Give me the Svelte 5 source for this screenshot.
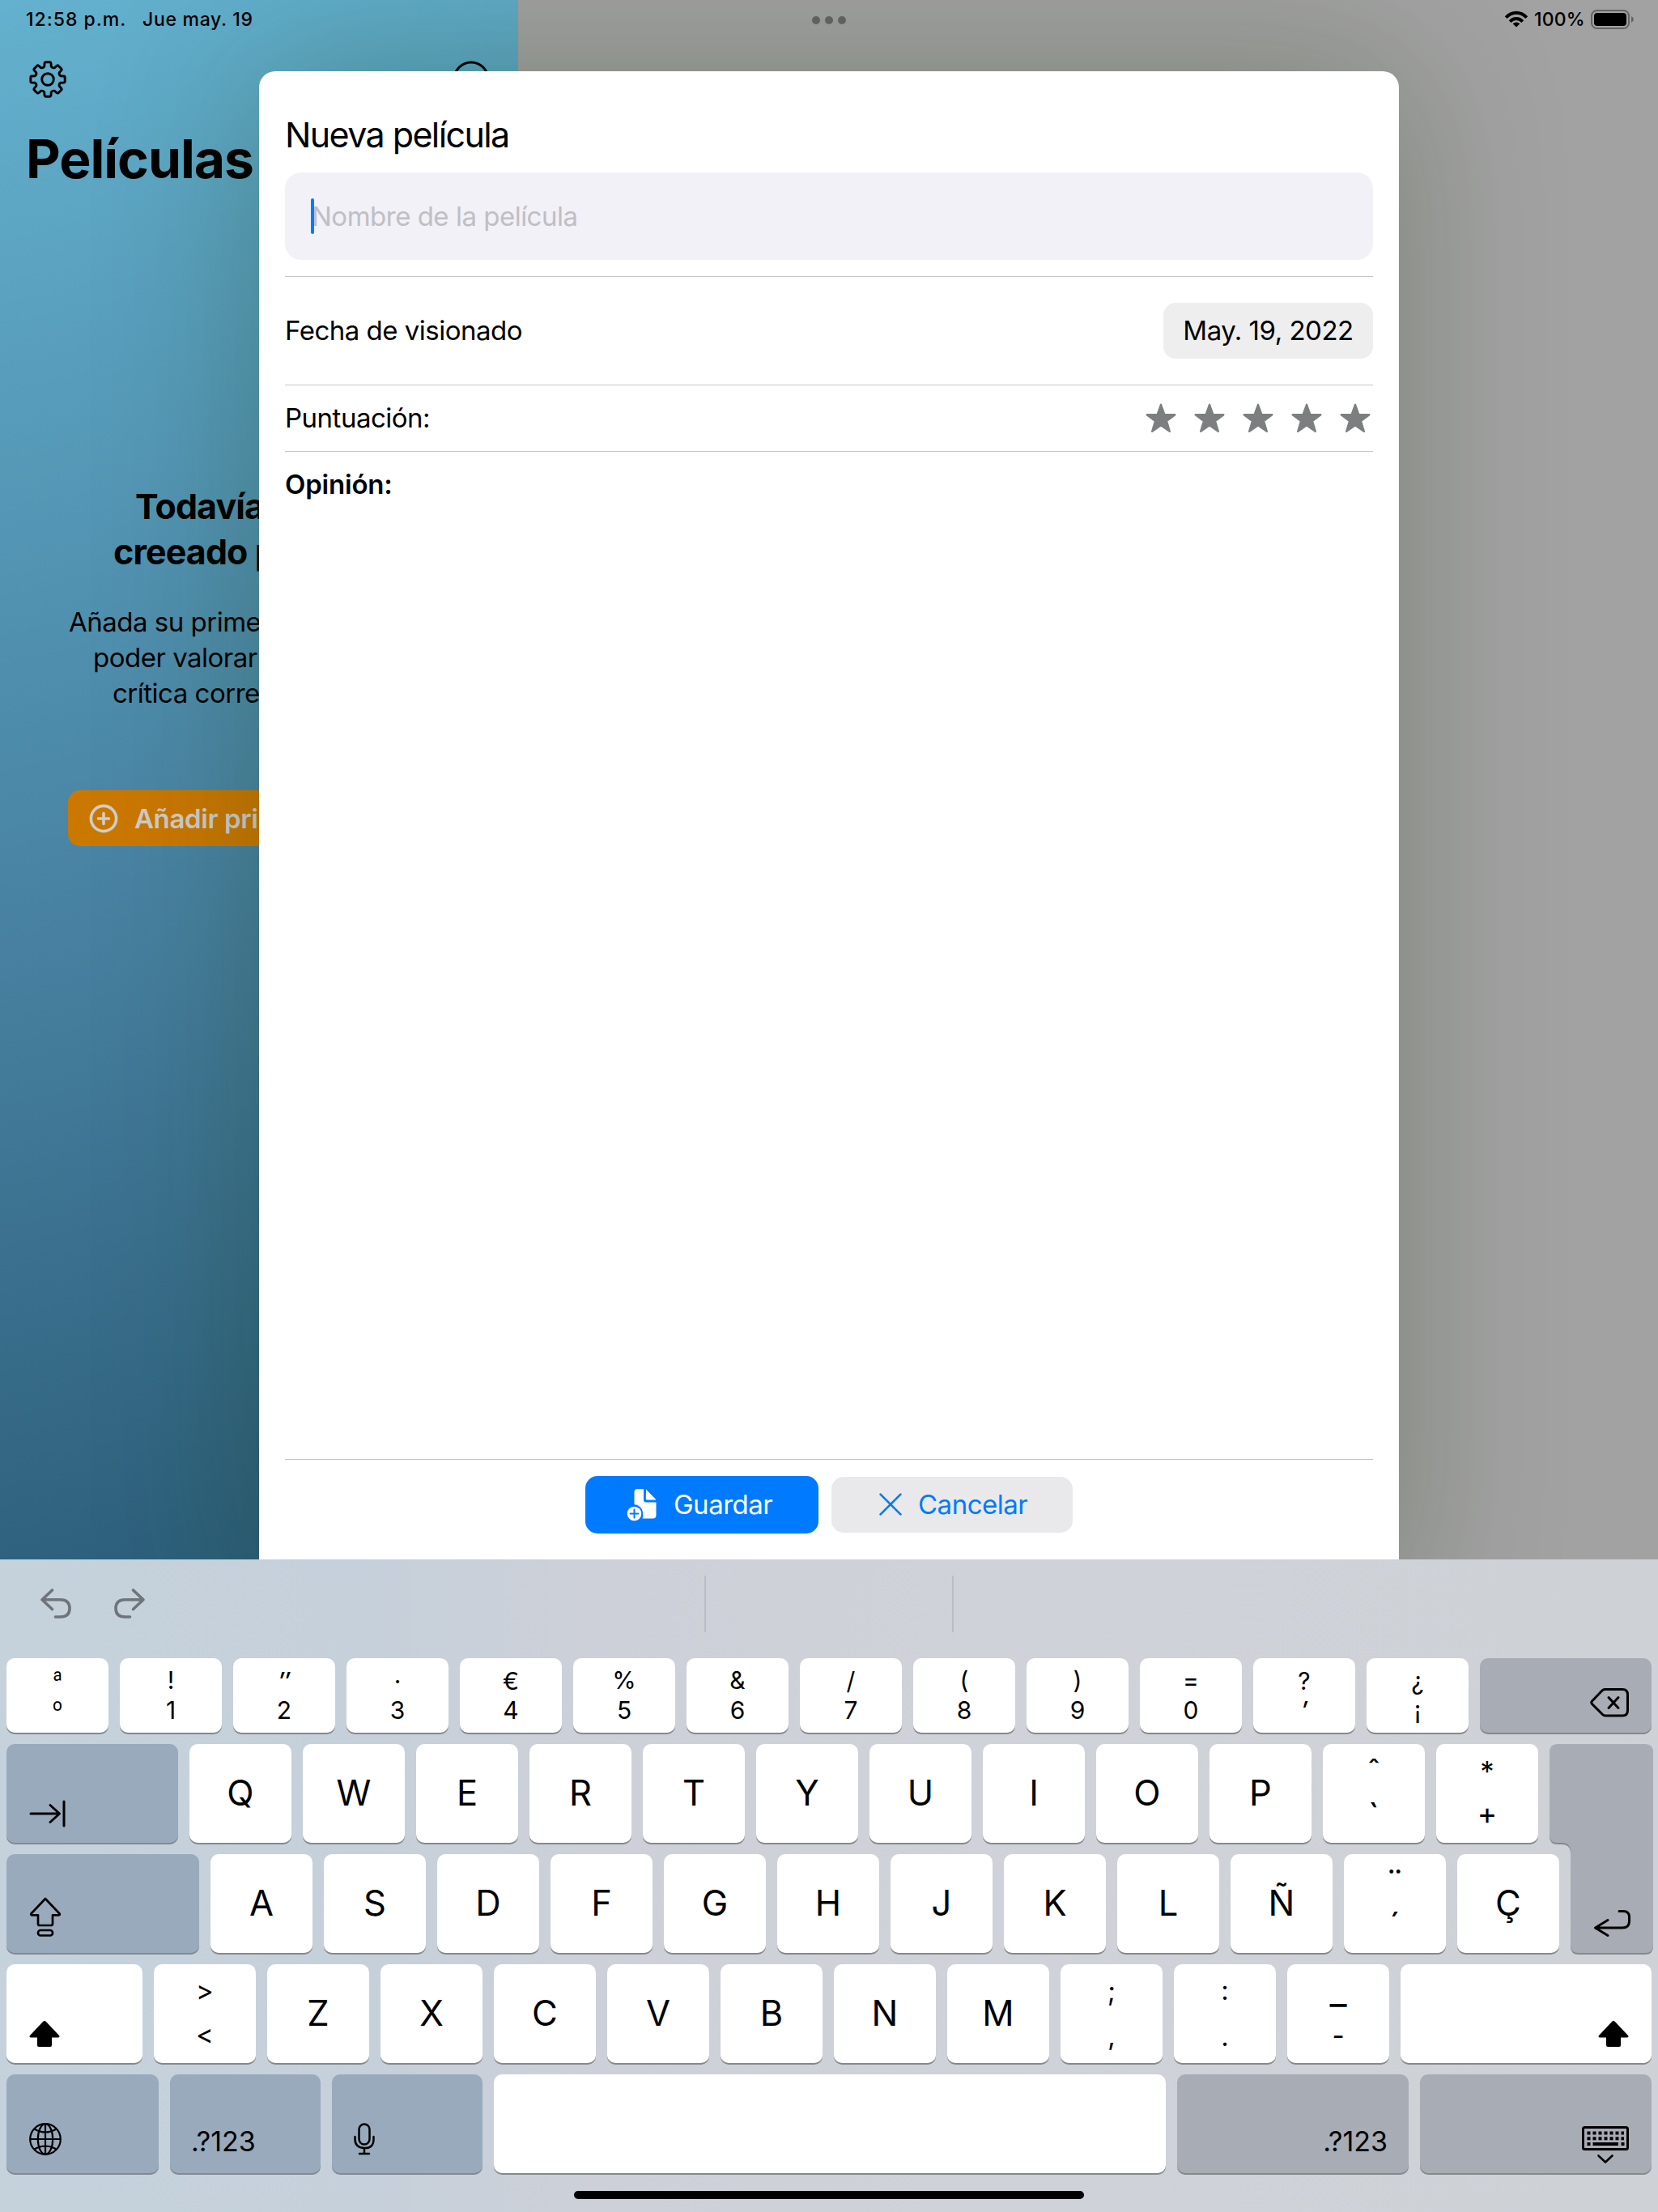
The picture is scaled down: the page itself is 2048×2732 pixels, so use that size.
<script>
  const letters = (s) => [...s].map((c) => ({ main: c }));
  // A two-symbol key; the options nudge or resize glyphs that sit high or low in the font
  const dual = (up, low, opts = {}) => ({ up, low, upShift: 0, lowShift: 0, upScale: 1, lowScale: 1, ...opts });

  const numberRow = [
    dual('ª', 'º', { light: true, upShift: -1 }),
    dual('!', '1', { upShift: -1 }),
    dual('″', '2', { upSlant: true }),
    dual('·', '3'),
    dual('€', '4'),
    dual('%', '5', { upShift: -1 }),
    dual('&', '6', { upShift: -1 }),
    dual('/', '7'),
    dual('(', '8', { upShift: -1 }),
    dual(')', '9', { upShift: -1 }),
    dual('=', '0', { upShift: -1 }),
    dual('?', '′', { lowSlant: true }),
    dual('¿', '¡'),
  ];
  const rowQ = [
    ...letters('QWERTYUIOP'),
    dual('ˆ', '`', { upScale: 1.15, lowScale: 1.3, lowShift: 0 }),
    dual('*', '+', { upScale: 1.05, lowShift: -3, lowScale: 1.12 }),
  ];
  const rowA = [
    ...letters('ASDFGHJKLÑ'),
    dual('¨', '´', { upScale: 1.25, upShift: 2, lowScale: 1.25, lowShift: -2 }),
    { main: 'Ç' },
  ];
  const rowZ = [
    dual('>', '<', { upShift: -1, lowShift: -3 }),
    ...letters('ZXCVBNM'),
    dual(';', ',', { lowShift: -1 }),
    dual(':', '.', { upShift: -1 }),
    dual('_', '-', { upScale: 1.4, upShift: -1, lowShift: -1 }),
  ];

  const stars = [1, 2, 3, 4, 5];

  // Gear outline: eight trapezoid teeth around the centre of a 48x48 box
  function gearPath() {
    const p = (r, deg) => {
      const a = ((deg - 90) * Math.PI) / 180;
      return `${(24 + r * Math.cos(a)).toFixed(2)} ${(24 + r * Math.sin(a)).toFixed(2)}`;
    };
    let d = '';
    for (let i = 0; i < 8; i++) {
      const c = i * 45;
      d += `${i ? 'L' : 'M'}${p(16.4, c - 15)}L${p(20, c - 11.5)}Q${p(21.6, c - 10)} ${p(21.3, c - 6)}`;
      d += `L${p(21.3, c + 6)}Q${p(21.6, c + 10)} ${p(20, c + 11.5)}L${p(16.4, c + 15)}`;
      d += `Q${p(14.8, c + 22.5)} ${p(16.4, c + 30)}`;
    }
    return d + 'Z';
  }
</script>

{#snippet key(k)}
  <div class="key" class:light={k.light}>
    {#if k.main}
      <span class="main">{k.main}</span>
    {:else}
      <span class="sym" class:slant={k.upSlant} style:--shift="{k.upShift}px" style:--scale={k.upScale}>{k.up}</span>
      <span class="sym" class:slant={k.lowSlant} style:--shift="{k.lowShift}px" style:--scale={k.lowScale}>{k.low}</span>
    {/if}
  </div>
{/snippet}

<div class="screen">
  <aside class="sidebar">
    <nav class="tools">
      <svg width="48" height="48" viewBox="0 0 48 48" fill="none" stroke="#000" stroke-width="2.9" stroke-linejoin="round">
        <path d={gearPath()} />
        <circle cx="24" cy="24" r="7.3" />
      </svg>
      <svg width="48" height="48" viewBox="0 0 48 48" fill="none" stroke="#000" stroke-width="3">
        <circle cx="24" cy="24" r="21" />
        <path d="M24 15v18M15 24h18" />
      </svg>
    </nav>
    <h1>Películas</h1>
    <div class="empty">
      <h2><span class="l1">Todavía</span><span class="l2">creeado p</span></h2>
      <p><span class="l3">Añada su prime</span><span class="l4">poder valorar</span><span class="l5">crítica corre</span></p>
      <div class="add">
        <svg width="36" height="36" viewBox="0 0 36 36" fill="none" stroke="#d0cecb" stroke-width="3.6" stroke-linecap="round">
          <circle cx="18" cy="18" r="15.6" />
          <path d="M18 11.5v13M11.5 18h13" />
        </svg>
        <span>Añadir pri</span>
      </div>
    </div>
  </aside>
  <main class="detail"></main>

  <section class="modal">
    <h3>Nueva película</h3>
    <div class="field"><i class="caret"></i><span>Nombre de la película</span></div>
    <div class="row date"><span class="lift">Fecha de visionado</span><span class="pill">May. 19, 2022</span></div>
    <div class="row rating">
      <span class="lift">Puntuación:</span>
      <div class="stars">
        {#each stars as s (s)}
          <svg width="38" height="37" viewBox="0 0 38 37">
            <path fill="#7b7f80" stroke="#7b7f80" stroke-width="2.4" stroke-linejoin="round" d="M19 1.8L23.3 13.9L36.3 14.2L26 22.1L29.8 34.8L19 27.2L8.2 34.8L12 22.1L1.7 14.2L14.7 13.9Z" />
          </svg>
        {/each}
      </div>
    </div>
    <div class="row opinion"><b>Opinión:</b></div>
    <div class="actions">
      <button class="save">
        <svg width="38" height="42" viewBox="0 0 38 42">
          <path fill="#fff" d="M9.500 20V5Q9.500 1 13.500 1H21V14.500Q21 17.500 24 17.500H36.500V33.500Q36.500 37.500 32.500 37.500H19.500Q21 34 20 29.500Q18 21 9.500 20Z" />
          <path fill="#fff" d="M24 1.500L36 13.800Q36.500 14.600 35.500 14.600H25.500Q23.800 14.600 23.800 13Z" />
          <circle cx="9.500" cy="31.500" r="8.800" fill="#fff" />
          <path d="M9.500 26.500v10M4.500 31.500h10" stroke="#007aff" stroke-width="2" stroke-linecap="round" />
        </svg>
        <span class="lift">Guardar</span>
      </button>
      <button class="cancel">
        <svg class="lift" width="28" height="28" viewBox="0 0 28 28" fill="none" stroke="#007aff" stroke-width="2.700" stroke-linecap="round">
          <path d="M1.600 1.600L26.400 26.400M26.400 1.600L1.600 26.400" />
        </svg>
        <span class="lift">Cancelar</span>
      </button>
    </div>
  </section>

  <header class="status">
    <span class="time">12:58 p.m.</span>
    <span class="day">Jue may. 19</span>
    <span class="dots"><i></i><i></i><i></i></span>
    <svg class="wifi" width="30" height="22" viewBox="0 0 30 22" fill="none" stroke="#000" stroke-width="4">
      <path d="M2.200 8.600Q8 2.800 15 2.800T27.800 8.600" />
      <path d="M7.200 13.600Q10.500 10 15 10T22.800 13.600" />
      <path fill="#000" stroke="none" d="M15 20.400L10.600 16.200Q15 12.600 19.400 16.200Z" />
    </svg>
    <span class="pct">100%</span>
    <svg class="battery" width="54" height="24" viewBox="0 0 54 24">
      <rect x="1" y="1" width="46" height="22" rx="6.500" fill="none" stroke="#646464" stroke-width="2" />
      <rect x="4" y="4" width="40" height="16" rx="4" fill="#000" />
      <path fill="#646464" d="M50 8Q53 9.500 53 12T50 16Z" />
    </svg>
  </header>

  <section class="keyboard">
    <div class="suggest">
      <svg width="40" height="40" viewBox="0 0 40 40" fill="none" stroke="#6e7479" stroke-width="3.600" stroke-linecap="round" stroke-linejoin="round">
        <path d="M15.500 3L3 14.800L15.500 26.500M3 14.800H25.500Q37 15 37 25.500T25.500 36H19.500" />
      </svg>
      <svg width="40" height="40" viewBox="0 0 40 40" fill="none" stroke="#6e7479" stroke-width="3.600" stroke-linecap="round" stroke-linejoin="round">
        <path d="M24.500 3L37 14.800L24.500 26.500M37 14.800H14.500Q3 15 3 25.500T14.500 36H20.500" />
      </svg>
      <i class="bar first"></i><i class="bar"></i>
    </div>

    <div class="keys numbers">
      {#each numberRow as k, i (i)}{@render key(k)}{/each}
      <div class="key dark grow right back">
        <svg width="48" height="36" viewBox="0 0 48 36" fill="none" stroke="#000" stroke-width="3" stroke-linecap="round" stroke-linejoin="round">
          <path d="M15.500 2.500Q17 1.500 19 1.500H40Q46.500 1.500 46.500 8V27.500Q46.500 34 40 34H19Q17 34 15.500 32.500L2.500 19.500Q1 17.800 2.500 16Z" />
          <path d="M23 11.500L35 24.500M35 11.500L23 24.500" />
        </svg>
      </div>
    </div>

    <div class="double">
      <div class="keys">
        <div class="key dark tint left tab">
          <svg width="46" height="34" viewBox="0 0 46 34" fill="none" stroke="#000" stroke-width="3" stroke-linecap="round" stroke-linejoin="round">
            <path d="M2 17H37M26 6.500L37.500 17L26 27.500M43 2V32" />
          </svg>
        </div>
        {#each rowQ as k, i (i)}{@render key(k)}{/each}
      </div>
      <div class="keys">
        <div class="key dark tint left caps">
          <svg width="40" height="50" viewBox="0 0 40 50" fill="none" stroke="#000" stroke-width="2.700" stroke-linejoin="round">
            <path d="M20 2L37.500 20.500Q38.500 22.300 36.500 22.300H29V33Q29 35 27 35H13Q11 35 11 33V22.300H3.500Q1.500 22.300 2.500 20.500Z" />
            <rect x="11" y="41" width="18" height="6.500" rx="3" />
          </svg>
        </div>
        {#each rowA as k, i (i)}{@render key(k)}{/each}
      </div>
      <svg class="enter" width="128" height="260" viewBox="0 0 128 260">
        <path fill="#85888d" d="M10 2H118Q128 2 128 12V250Q128 260 118 260H36Q26 260 26 250V136Q26 124 16 124H10Q0 124 0 114V12Z" />
        <path fill="#a8acb5" d="M10 0H118Q128 0 128 10V248Q128 258 118 258H36Q26 258 26 248V134Q26 122 16 122H10Q0 122 0 112V10Q0 0 10 0Z" />
        <path fill="none" stroke="#000" stroke-width="3" stroke-linecap="round" stroke-linejoin="round" d="M72 217.500L56.500 227L72 236.500M56.500 227H90Q98.500 227 98.500 219V213.500Q98.500 206.500 91 206.500H86" />
      </svg>
    </div>

    <div class="keys">
      <div class="key left shift">
        <svg width="38" height="34" viewBox="0 0 38 34">
          <path d="M19 1Q20 1 21 2L37 19Q38.500 21.500 35.500 21.500H28V31Q28 33 26 33H12Q10 33 10 31V21.500H2.500Q-.5 21.500 1 19L17 2Q18 1 19 1Z" />
        </svg>
      </div>
      {#each rowZ as k, i (i)}{@render key(k)}{/each}
      <div class="key grow right shift-r">
        <svg width="38" height="34" viewBox="0 0 38 34">
          <path d="M19 1Q20 1 21 2L37 19Q38.500 21.500 35.500 21.500H28V31Q28 33 26 33H12Q10 33 10 31V21.500H2.500Q-.5 21.500 1 19L17 2Q18 1 19 1Z" />
        </svg>
      </div>
    </div>

    <div class="keys">
      <div class="key dark tint left globe">
        <svg width="40" height="40" viewBox="0 0 40 40" fill="none" stroke="#000" stroke-width="2.200">
          <circle cx="20" cy="20" r="18.800" />
          <ellipse cx="20" cy="20" rx="9.200" ry="18.800" />
          <path d="M20 1V39M1 20H39M6.500 7.500Q20 15.500 33.500 7.500M6.500 32.500Q20 24.500 33.500 32.500" />
        </svg>
      </div>
      <div class="key dark tint left num"><span class="alt">.?123</span></div>
      <div class="key dark tint left mic">
        <svg width="26" height="40" viewBox="0 0 26 40" fill="none" stroke="#000" stroke-width="2.500" stroke-linecap="round">
          <rect x="6.500" y="1.500" width="13" height="25" rx="6.500" />
          <path d="M1.500 17V20Q1.500 30.500 13 31T24.500 20V17M13 31V38M7 38H19" />
        </svg>
      </div>
      <div class="key space"></div>
      <div class="key dark right num-r"><span class="alt">.?123</span></div>
      <div class="key dark right hide">
        <svg width="58" height="46" viewBox="0 0 58 46" fill="none" stroke="#000">
          <rect x="1.500" y="1.500" width="55" height="27" rx="2" stroke-width="3" />
          <path stroke-width="4" stroke-dasharray="4 3" d="M6.500 8.500H52M6.500 15.200H52" />
          <path stroke-width="4" d="M6.500 22H10.500M13.500 22H45M48.500 22H52.500" />
          <path stroke-width="2.600" stroke-linecap="round" stroke-linejoin="round" d="M20.500 36.500L29 44.500L37.500 36.500" />
        </svg>
      </div>
    </div>
    <div class="home"></div>
  </section>
</div>

<style>
  :global(body) {
    margin: 0;
  }
  .screen {
    position: relative;
    display: flex;
    width: 2048px;
    height: 2732px;
    overflow: hidden;
    font-family: Inter, 'Noto Sans', sans-serif;
    color: #000;
    font-size: 33px;
    line-height: 44px;
    letter-spacing: -0.5px;
  }
  .screen * {
    box-sizing: border-box;
  }
  h1, h2, h3, p {
    margin: 0;
    white-space: nowrap;
  }
  svg {
    display: block;
    flex: none;
  }
  .sidebar {
    width: 640px;
    background: linear-gradient(167deg, #63b1ce 0%, #4780a0 41%, #2a5c77 72%, #214f68 100%);
  }
  .detail {
    flex: 1;
    background: #a2a2a2;
  }
  .tools {
    display: flex;
    justify-content: space-between;
    padding: 74px 34px 0 35px;
  }
  h1 {
    margin: 34px 0 0 32px;
    font-size: 66px;
    line-height: 80px;
    font-weight: 700;
    letter-spacing: -1.05px;
  }
  .empty {
    padding-top: 361px;
  }
  h2 {
    font-size: 43px;
    line-height: 56px;
    font-weight: 700;
    letter-spacing: -0.9px;
  }
  h2 span, p span {
    display: block;
  }
  .l1 { padding-left: 167px; }
  .l2 { padding-left: 140px; }
  p {
    margin-top: 37px;
  }
  .l3 { padding-left: 85px; }
  .l4 { padding-left: 115px; }
  .l5 { padding-left: 139px; }
  .add {
    display: flex;
    align-items: center;
    gap: 20px;
    width: 472px;
    height: 69px;
    margin: 98px 0 0 84px;
    padding-left: 26px;
    border-radius: 15px;
    background: #cb7800;
    color: #cfcdca;
    font-weight: 600;
    white-space: nowrap;
    letter-spacing: -0.4px;
  }

  .modal {
    position: absolute;
    left: 320px;
    top: 88px;
    width: 1408px;
    height: 1900px;
    padding: 52px 32px 0;
    border-radius: 20px;
    background: #fff;
    box-shadow: 0 0 200px rgba(20, 50, 0, 0.28);
  }
  .lift {
    position: relative;
    top: -1px;
  }
  h3 {
    height: 73px;
    font-size: 43px;
    line-height: 53px;
    font-weight: 400;
    letter-spacing: -1.6px;
  }
  .field {
    display: flex;
    align-items: center;
    height: 108px;
    padding-left: 32px;
    margin-bottom: 20px;
    border-radius: 20px;
    background: #f2f1f7;
    color: #bfbfc4;
  }
  .caret {
    width: 4px;
    height: 44px;
    margin-right: -3px;
    border-radius: 2px;
    background: #007aff;
    z-index: 1;
  }
  .row {
    display: flex;
    align-items: center;
    justify-content: space-between;
    border-top: 1px solid #c6c6c8;
  }
  .date { height: 134px; }
  .rating { height: 82px; }
  .opinion { height: 81px; }
  .opinion b {
    font-weight: 600;
    letter-spacing: -0.2px;
  }
  .pill {
    width: 259px;
    height: 69px;
    border-radius: 15px;
    background: #eeeeee;
    line-height: 69px;
    text-align: center;
  }
  .stars {
    display: flex;
    gap: 22px;
    padding-right: 3px;
  }
  .actions {
    display: flex;
    align-items: center;
    gap: 16px;
    margin-top: 1164px;
    border-top: 1px solid #c6c6c8;
    padding: 20px 0 0 371px;
  }
  button {
    display: flex;
    align-items: center;
    border: 0;
    font: inherit;
    letter-spacing: inherit;
    border-radius: 15px;
    padding: 0;
  }
  .save {
    width: 288px;
    height: 71px;
    padding-left: 51px;
    gap: 20px;
    background: #007aff;
    color: #fff;
  }
  .cancel {
    width: 298px;
    height: 69px;
    padding-left: 59px;
    gap: 20px;
    background: #e9e9eb;
    color: #007aff;
  }

  .status {
    position: absolute;
    inset: 0 0 auto 0;
    display: flex;
    align-items: center;
    height: 48px;
    padding-left: 32px;
    font-size: 23px;
    font-weight: 500;
    line-height: 48px;
    white-space: nowrap;
  }
  .time { width: 144px; letter-spacing: 1px; }
  .day { width: 827px; letter-spacing: 0.7px; }
  .dots {
    display: flex;
    gap: 6px;
    width: 855px;
  }
  .dots i {
    width: 10px;
    height: 10px;
    margin-top: 2px;
    border-radius: 5px;
    background: #5e625c;
  }
  .wifi { margin-right: 7px; }
  .pct { width: 70px; letter-spacing: 0.2px; }

  .keyboard {
    position: absolute;
    inset: 1926px 0 0 0;
    letter-spacing: 0;
    background: linear-gradient(90deg, #c5d2db 0%, #c6d0da 22%, #cdd0d8 36%, #cfd2d8 60%, #ced1d6 100%);
  }
  .suggest {
    display: flex;
    height: 122px;
    padding: 35px 0 0 49px;
    gap: 51px;
  }
  .bar {
    width: 2px;
    height: 70px;
    margin-top: -15px;
    margin-left: 253px;
    background: #babdc1;
  }
  .bar.first { margin-left: 639px; }
  .keys {
    display: flex;
    gap: 14px;
    padding: 0 8px;
    margin-bottom: 14px;
    height: 122px;
  }
  .numbers {
    height: 92px;
  }
  .double {
    position: relative;
  }
  .enter {
    position: absolute;
    right: 6px;
    top: 0;
  }
  .key {
    display: flex;
    flex-direction: column;
    align-items: center;
    justify-content: center;
    flex: none;
    width: 126px;
    border-radius: 10px;
    background: #fff;
    box-shadow: 0 2px 0 #85898e;
  }
  .main {
    margin-top: -3px;
    font-size: 43.5px;
  }
  .sym {
    height: 56px;
    line-height: 56px;
    font-size: calc(33px * var(--scale));
    transform: translateY(var(--shift));
  }
  .numbers .sym {
    height: 36px;
    line-height: 36px;
    font-size: 30px;
  }
  .numbers .light .sym {
    font-weight: 300;
  }
  .slant {
    font-style: italic;
    font-weight: 500;
  }
  .dark { background: #a8acb5; }
  .dark.tint { background: #9aaabd; }
  .left {
    align-items: flex-start;
    justify-content: flex-end;
    padding-left: 28px;
  }
  .right {
    align-items: flex-end;
    justify-content: flex-end;
    padding-right: 28px;
  }
  .grow {
    flex: 1;
  }
  .back { padding-bottom: 19px; }
  .tab { width: 212px; padding-bottom: 19px; }
  .caps { width: 238px; padding-bottom: 19px; }
  .shift, .shift-r { padding-bottom: 19px; }
  .shift { width: 168px; }
  .globe { width: 188px; padding-bottom: 22px; }
  .num { width: 186px; padding-bottom: 17px; padding-left: 26px; }
  .mic { width: 186px; padding-bottom: 22px; padding-left: 27px; }
  .space { width: 830px; }
  .num-r { width: 286px; padding-bottom: 17px; padding-right: 26px; }
  .hide { width: 286px; padding-bottom: 12px; }
  .alt { font-size: 34px; line-height: 44px; }
  .home {
    position: absolute;
    left: 709px;
    bottom: 16px;
    width: 630px;
    height: 10px;
    border-radius: 5px;
    background: #000;
  }
</style>
